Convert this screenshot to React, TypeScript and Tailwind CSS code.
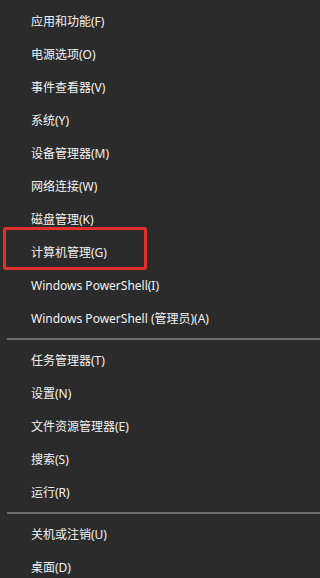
const groups: string[][] = [
  [
    '应用和功能(F)',
    '电源选项(O)',
    '事件查看器(V)',
    '系统(Y)',
    '设备管理器(M)',
    '网络连接(W)',
    '磁盘管理(K)',
    '计算机管理(G)',
    'Windows PowerShell(I)',
    'Windows PowerShell (管理员)(A)',
  ],
  ['任务管理器(T)', '设置(N)', '文件资源管理器(E)', '搜索(S)', '运行(R)'],
  ['关机或注销(U)', '桌面(D)'],
]

export default function App() {
  return (
    <div
      className="relative min-h-[578px] w-full overflow-hidden bg-[#2b2b2b] pt-[5px] text-[12px] text-[#f2f2f2]"
      style={{ fontFamily: '"Noto Sans", "Noto Sans CJK SC", sans-serif' }}
    >
      {groups.map((items, gi) => (
        <div key={gi}>
          {gi > 0 && <div className="mb-[4px] ml-[7px] mt-[3px] h-[2px] bg-[#6e6e6e]" />}
          {items.map((label) => (
            <div key={label} className="flex h-[33px] items-center whitespace-nowrap pl-[31px]">
              {label}
            </div>
          ))}
        </div>
      ))}

      {/* highlight around 计算机管理 */}
      <div className="absolute left-[3px] top-[227px] h-[43px] w-[144px] rounded-[3px] border-[3px] border-[#e5312d]" />
    </div>
  )
}
